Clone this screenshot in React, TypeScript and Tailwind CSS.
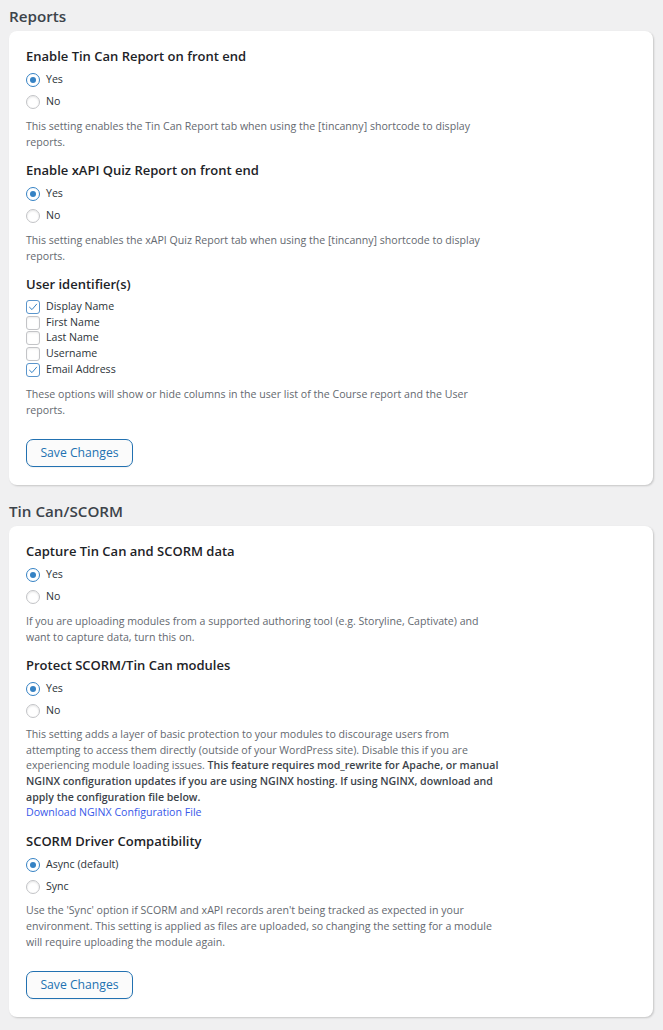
import React from "react";

const font = { fontFamily: '"Open Sans", "Noto Sans", sans-serif' };

function Radio({ checked, label }: { checked?: boolean; label: string }) {
  return (
    <div className="flex h-[22px] items-center">
      <span
        className={
          checked
            ? "flex h-[14px] w-[14px] items-center justify-center rounded-full border border-[#3582c4] bg-white"
            : "flex h-[14px] w-[14px] items-center justify-center rounded-full border border-[#c3c4c7] bg-white shadow-[inset_0_1px_2px_rgba(0,0,0,0.1)]"
        }
      >
        {checked && <span className="h-[6px] w-[6px] rounded-full bg-[#3582c4]" />}
      </span>
      <span className="ml-[6px] text-[10.6px] text-[#2c3338]">{label}</span>
    </div>
  );
}

function Check({ checked, label }: { checked?: boolean; label: string }) {
  return (
    <div className="flex h-[15.75px] items-center">
      <span
        className={
          checked
            ? "flex h-[14px] w-[14px] items-center justify-center rounded-[3px] border border-[#5a95cc] bg-white"
            : "flex h-[14px] w-[14px] items-center justify-center rounded-[3px] border border-[#c3c4c7] bg-white shadow-[inset_0_1px_2px_rgba(0,0,0,0.08)]"
        }
      >
        {checked && (
          <svg width="10" height="10" viewBox="0 0 10 10" fill="none">
            <path d="M1.5 5.2 L4 7.6 L8.6 2.2" stroke="#3582c4" strokeWidth="1" strokeLinecap="round" strokeLinejoin="round" />
          </svg>
        )}
      </span>
      <span className="ml-[6px] text-[10.6px] text-[#2c3338]">{label}</span>
    </div>
  );
}

function FieldTitle({ children }: { children: React.ReactNode }) {
  return <h3 className="h-[20px] text-[13px] font-semibold leading-[20px] text-[#1d2327]">{children}</h3>;
}

function Desc({ children, tight }: { children: React.ReactNode; tight?: boolean }) {
  return (
    <p
      className={
        tight
          ? "whitespace-nowrap text-[10.6px] leading-[15.7px] text-[#646970]"
          : "whitespace-nowrap text-[10.6px] leading-[16px] text-[#646970]"
      }
    >
      {children}
    </p>
  );
}

function SaveButton() {
  return (
    <button className="h-[28px] w-[107px] rounded-[7px] border border-[#2271b1] bg-[#fbfbfb] text-[12.2px] text-[#2271b1] shadow-[0_1px_1px_rgba(0,0,0,0.05)]">
      Save Changes
    </button>
  );
}

function Section({ title, children }: { title: string; children: React.ReactNode }) {
  return (
    <section className="flex flex-col gap-[4px]">
      <h2 className="h-[22px] text-[15.2px] font-semibold leading-[22px] text-[#3c434a]">{title}</h2>
      <div className="flex flex-col rounded-[8px] bg-white px-[17px] pb-[18px] pt-[15px] shadow-[1px_1px_2px_rgba(0,0,0,0.18)]">
        {children}
      </div>
    </section>
  );
}

export default function App() {
  return (
    <div className="flex min-h-[1030px] w-[663px] flex-col gap-[15px] bg-[#f0f0f1] pl-[9px] pr-[10px] pt-[5px]" style={font}>
      <Section title="Reports">
        <FieldTitle>Enable Tin Can Report on front end</FieldTitle>
        <div className="mt-[3px]">
          <Radio checked label="Yes" />
          <Radio label="No" />
        </div>
        <div className="mt-[5px]">
          <Desc>
            This setting enables the Tin Can Report tab when using the [tincanny] shortcode to display
            <br />
            reports.
          </Desc>
        </div>
        <div className="mt-[10px]">
          <FieldTitle>Enable xAPI Quiz Report on front end</FieldTitle>
        </div>
        <div className="mt-[3px]">
          <Radio checked label="Yes" />
          <Radio label="No" />
        </div>
        <div className="mt-[5px]">
          <Desc>
            This setting enables the xAPI Quiz Report tab when using the [tincanny] shortcode to display
            <br />
            reports.
          </Desc>
        </div>
        <div className="mt-[10px]">
          <FieldTitle>User identifier(s)</FieldTitle>
        </div>
        <div className="mt-[5px]">
          <Check checked label="Display Name" />
          <Check label="First Name" />
          <Check label="Last Name" />
          <Check label="Username" />
          <Check checked label="Email Address" />
        </div>
        <div className="mt-[8px]">
          <Desc>
            These options will show or hide columns in the user list of the Course report and the User
            <br />
            reports.
          </Desc>
        </div>
        <div className="mt-[21px]">
          <SaveButton />
        </div>
      </Section>

      <Section title="Tin Can/SCORM">
        <FieldTitle>Capture Tin Can and SCORM data</FieldTitle>
        <div className="mt-[3px]">
          <Radio checked label="Yes" />
          <Radio label="No" />
        </div>
        <div className="mt-[5px]">
          <Desc>
            If you are uploading modules from a supported authoring tool (e.g. Storyline, Captivate) and
            <br />
            want to capture data, turn this on.
          </Desc>
        </div>
        <div className="mt-[10px]">
          <FieldTitle>Protect SCORM/Tin Can modules</FieldTitle>
        </div>
        <div className="mt-[3px]">
          <Radio checked label="Yes" />
          <Radio label="No" />
        </div>
        <div className="mt-[5px]">
          <Desc tight>
            This setting adds a layer of basic protection to your modules to discourage users from
            <br />
            attempting to access them directly (outside of your WordPress site). Disable this if you are
            <br />
            experiencing module loading issues.{" "}
            <strong className="font-semibold text-[#3c434a]">This feature requires mod_rewrite for Apache, or manual</strong>
            <br />
            <strong className="font-semibold text-[#3c434a]">
              NGINX configuration updates if you are using NGINX hosting. If using NGINX, download and
            </strong>
            <br />
            <strong className="font-semibold text-[#3c434a]">apply the configuration file below.</strong>
            <br />
            <a className="text-[#3858e9]">Download NGINX Configuration File</a>
          </Desc>
        </div>
        <div className="mt-[10px]">
          <FieldTitle>SCORM Driver Compatibility</FieldTitle>
        </div>
        <div className="mt-[3px]">
          <Radio checked label="Async (default)" />
          <Radio label="Sync" />
        </div>
        <div className="mt-[5px]">
          <Desc tight>
            Use the 'Sync' option if SCORM and xAPI records aren't being tracked as expected in your
            <br />
            environment. This setting is applied as files are uploaded, so changing the setting for a module
            <br />
            will require uploading the module again.
          </Desc>
        </div>
        <div className="mt-[21px]">
          <SaveButton />
        </div>
      </Section>
    </div>
  );
}
